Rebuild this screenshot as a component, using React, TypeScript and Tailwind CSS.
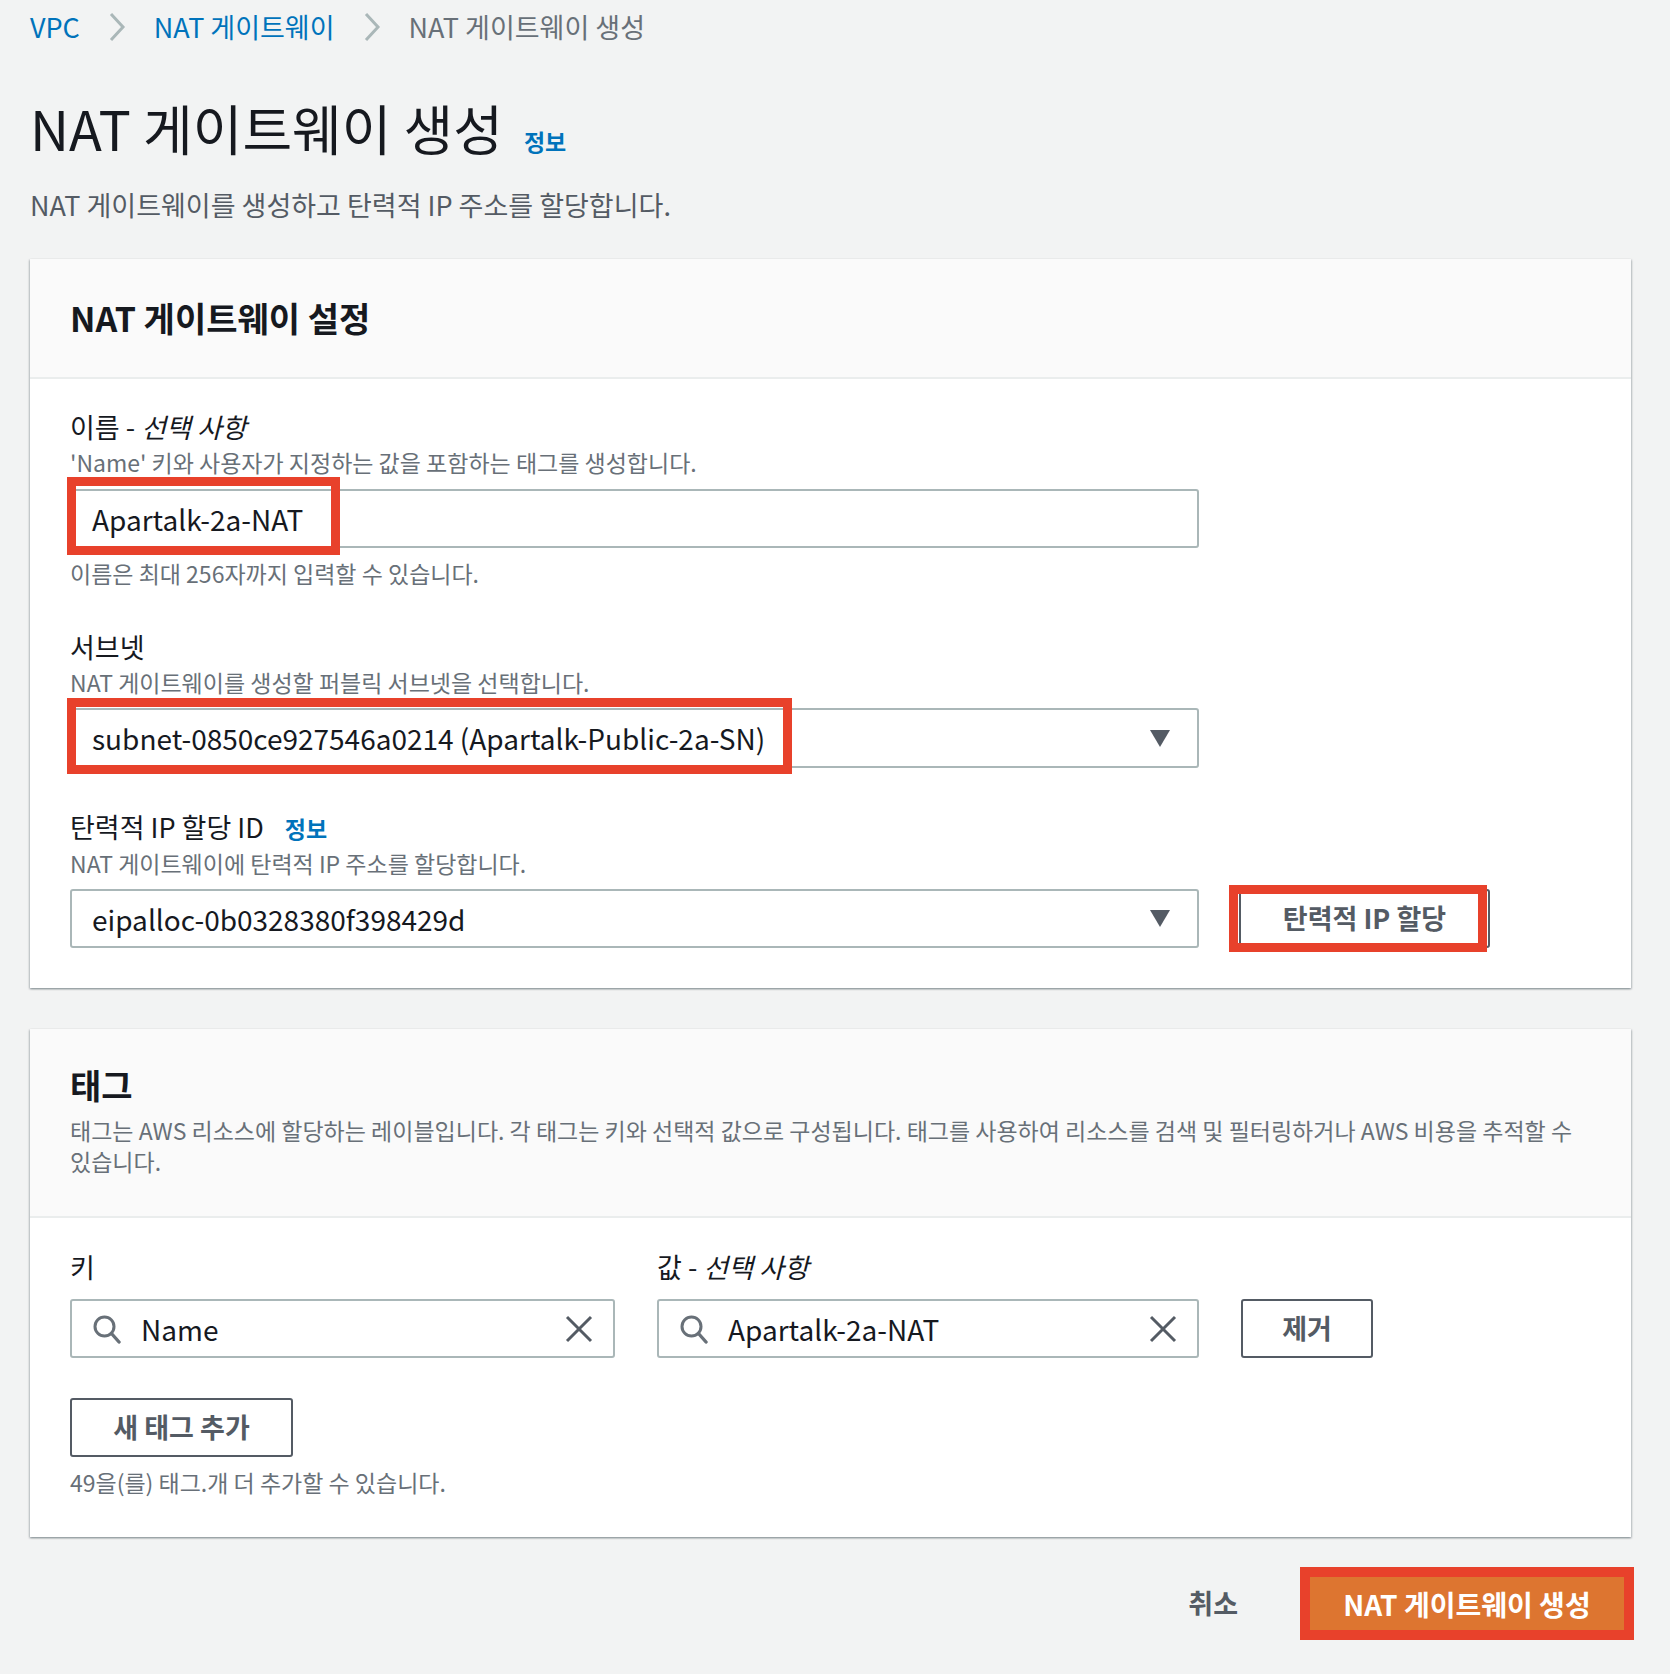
import React from "react";

const Chevron = () => (
  <svg width="20" height="32" viewBox="0 0 20 32" className="mx-[27px]">
    <polyline points="4,3 16,16 4,29" fill="none" stroke="#aab7b8" strokeWidth="3" />
  </svg>
);

const Caret = () => (
  <svg width="20" height="17" viewBox="0 0 20 17">
    <polygon points="0,0 20,0 10,17" fill="#545b64" strokeLinejoin="round" />
  </svg>
);

const SearchIcon = () => (
  <svg width="30" height="30" viewBox="0 0 30 30">
    <circle cx="12.5" cy="12.5" r="9.5" fill="none" stroke="#687078" strokeWidth="3" />
    <line x1="19.5" y1="19.5" x2="27" y2="28" stroke="#687078" strokeWidth="3.4" strokeLinecap="round" />
  </svg>
);

const ClearIcon = () => (
  <svg width="28" height="28" viewBox="0 0 28 28">
    <line x1="2" y1="2" x2="26" y2="26" stroke="#545b64" strokeWidth="3" />
    <line x1="26" y1="2" x2="2" y2="26" stroke="#545b64" strokeWidth="3" />
  </svg>
);

const Panel = ({ children }: { children: React.ReactNode }) => (
  <div className="w-[1601px] bg-white shadow-[0_1px_2px_0_rgba(0,28,36,0.3),1px_1px_2px_0_rgba(0,28,36,0.15),-1px_1px_2px_0_rgba(0,28,36,0.15)]">
    {children}
  </div>
);

const Label = ({ children }: { children: React.ReactNode }) => (
  <div className="text-[27px] leading-[36px] text-[#16191f]">{children}</div>
);

const Desc = ({ children }: { children: React.ReactNode }) => (
  <div className="mt-[2px] text-[23px] leading-[30px] text-[#687078]">{children}</div>
);

const App = () => {
  return (
    <div className="min-h-screen w-full bg-[#f2f3f3] pl-[30px] pb-[32px] font-['Noto_Sans_CJK_KR',sans-serif] text-[#16191f]">
      {/* breadcrumb */}
      <div className="flex items-center pt-[8px] h-[46px] text-[27px] leading-[38px]">
        <span className="text-[#0073bb]">VPC</span>
        <Chevron />
        <span className="text-[#0073bb]">NAT 게이트웨이</span>
        <Chevron />
        <span className="text-[#687078]">NAT 게이트웨이 생성</span>
      </div>

      {/* title */}
      <div className="mt-[50px] flex items-baseline">
        <h1 className="text-[54px] leading-[64px] font-normal">NAT 게이트웨이 생성</h1>
        <span className="ml-[21px] text-[23px] font-bold text-[#0073bb]">정보</span>
      </div>
      <div className="mt-[27px] text-[27px] leading-[36px] text-[#545b64]">
        NAT 게이트웨이를 생성하고 탄력적 IP 주소를 할당합니다.
      </div>

      {/* settings panel */}
      <div className="mt-[36px]">
        <Panel>
          <div className="h-[120px] flex items-center px-[40px] bg-[#fafafa] border-b-2 border-[#eaeded]">
            <h2 className="text-[34px] font-bold leading-[40px]">NAT 게이트웨이 설정</h2>
          </div>
          <div className="px-[40px] pt-[30px] pb-[40px]">
            {/* name */}
            <Label>
              이름 - <i>선택 사항</i>
            </Label>
            <Desc>'Name' 키와 사용자가 지정하는 값을 포함하는 태그를 생성합니다.</Desc>
            <div className="relative mt-[12px] w-[1129px]">
              <div className="h-[59px] flex items-center px-[20px] border-2 border-[#aab7b8] rounded-[3px] text-[28px]">
                Apartalk-2a-NAT
              </div>
              <div className="absolute -left-[3px] -top-[12px] w-[273px] h-[78px] border-[9px] border-[#e8412b]" />
            </div>
            <div className="mt-[10px] text-[23px] leading-[30px] text-[#687078]">
              이름은 최대 256자까지 입력할 수 있습니다.
            </div>

            {/* subnet */}
            <div className="mt-[41px]">
              <Label>서브넷</Label>
              <Desc>NAT 게이트웨이를 생성할 퍼블릭 서브넷을 선택합니다.</Desc>
              <div className="relative mt-[11px] w-[1129px]">
                <div className="h-[60px] flex items-center justify-between pl-[20px] pr-[27px] border-2 border-[#aab7b8] rounded-[3px] text-[28px]">
                  <span>subnet-0850ce927546a0214 (Apartalk-Public-2a-SN)</span>
                  <Caret />
                </div>
                <div className="absolute -left-[3px] -top-[10px] w-[725px] h-[76px] border-[9px] border-[#e8412b]" />
              </div>
            </div>

            {/* eip */}
            <div className="mt-[41px]">
              <Label>
                탄력적 IP 할당 ID
                <span className="ml-[21px] text-[23px] font-bold text-[#0073bb]">정보</span>
              </Label>
              <Desc>NAT 게이트웨이에 탄력적 IP 주소를 할당합니다.</Desc>
              <div className="mt-[11px] flex items-center gap-[40px]">
                <div className="w-[1129px] h-[59px] flex items-center justify-between pl-[20px] pr-[27px] border-2 border-[#aab7b8] rounded-[3px] text-[28px]">
                  <span>eipalloc-0b0328380f398429d</span>
                  <Caret />
                </div>
                <div className="relative">
                  <button className="w-[251px] h-[59px] border-2 border-[#545b64] rounded-[3px] bg-white text-[27px] font-bold text-[#545b64]">
                    탄력적 IP 할당
                  </button>
                  <div className="absolute -left-[10px] -top-[4px] w-[258px] h-[67px] border-[9px] border-[#e8412b]" />
                </div>
              </div>
            </div>
          </div>
        </Panel>
      </div>

      {/* tags panel */}
      <div className="mt-[41px]">
        <Panel>
          <div className="px-[40px] pt-[36px] pb-[39px] bg-[#fafafa] border-b-2 border-[#eaeded]">
            <h2 className="text-[34px] font-bold leading-[40px]">태그</h2>
            <div className="mt-[10px] w-[1515px] text-[23px] leading-[31px] text-[#687078]">
              태그는 AWS 리소스에 할당하는 레이블입니다. 각 태그는 키와 선택적 값으로 구성됩니다. 태그를 사용하여 리소스를 검색 및 필터링하거나 AWS 비용을 추적할 수 있습니다.
            </div>
          </div>
          <div className="px-[40px] pt-[31px] pb-[40px]">
            <div className="flex items-end gap-[42px]">
              <div>
                <Label>키</Label>
                <div className="mt-[14px] w-[545px] h-[59px] flex items-center pl-[20px] pr-[20px] border-2 border-[#aab7b8] rounded-[3px] text-[28px]">
                  <SearchIcon />
                  <span className="ml-[19px] flex-1">Name</span>
                  <ClearIcon />
                </div>
              </div>
              <div>
                <Label>
                  값 - <i>선택 사항</i>
                </Label>
                <div className="mt-[14px] w-[542px] h-[59px] flex items-center pl-[20px] pr-[20px] border-2 border-[#aab7b8] rounded-[3px] text-[28px]">
                  <SearchIcon />
                  <span className="ml-[19px] flex-1">Apartalk-2a-NAT</span>
                  <ClearIcon />
                </div>
              </div>
              <button className="w-[132px] h-[59px] border-2 border-[#545b64] rounded-[3px] bg-white text-[27px] font-bold text-[#545b64]">
                제거
              </button>
            </div>
            <button className="mt-[40px] w-[223px] h-[59px] border-2 border-[#545b64] rounded-[3px] bg-white text-[27px] font-bold text-[#545b64]">
              새 태그 추가
            </button>
            <div className="mt-[10px] text-[23px] leading-[30px] text-[#687078]">
              49을(를) 태그.개 더 추가할 수 있습니다.
            </div>
          </div>
        </Panel>
      </div>

      {/* footer */}
      <div className="mt-[30px] w-[1604px] flex items-center justify-end">
        <span className="mr-[62px] text-[27px] font-bold text-[#545b64]">취소</span>
        <div className="relative">
          <button className="w-[334px] h-[73px] bg-[#dd7530] text-[28px] font-bold text-white">
            NAT 게이트웨이 생성
          </button>
          <div className="absolute inset-0 border-[10px] border-[#e8412b]" />
        </div>
      </div>
    </div>
  );
};

export default App;
